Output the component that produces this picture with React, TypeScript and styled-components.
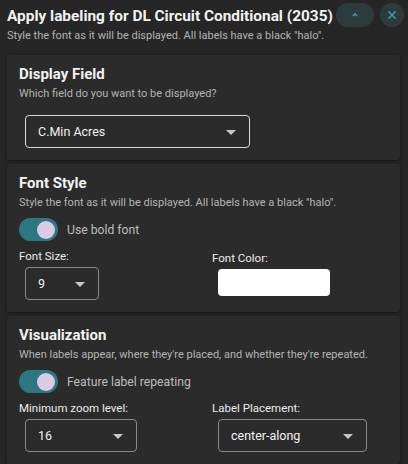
import React, { useState } from 'react'
import styled, { createGlobalStyle } from 'styled-components'

const GlobalStyle = createGlobalStyle`
    html, body {
        margin: 0;
        padding: 0;
        background: #262626;
        font-family: Roboto, 'Liberation Sans', sans-serif;
    }
`

const Page = styled.div`
    width: 408px;
    height: 464px;
    overflow: hidden;
    box-sizing: border-box;
    padding: 3px 4px 0 7px;
    display: flex;
    flex-direction: column;
`

const Header = styled.div`
    display: flex;
    align-items: flex-start;
    justify-content: space-between;
`

const HeaderText = styled.div`
    display: flex;
    flex-direction: column;
    min-width: 0;
`

const Title = styled.h1`
    margin: 2px 0 0;
    font-size: 15.4px;
    line-height: 22px;
    font-weight: 700;
    color: #f2f2f2;
    white-space: nowrap;
`

const Hint = styled.p`
    margin: 1px 0 0;
    font-size: 11px;
    line-height: 16px;
    color: #b4b4b4;
    white-space: nowrap;
`

const HeaderActions = styled.div`
    display: flex;
    gap: 6px;
    flex-shrink: 0;
`

const IconButton = styled.button<{ wide?: boolean }>`
    width: ${(p) => (p.wide ? '38px' : '24px')};
    height: 24px;
    border: none;
    border-radius: 12px;
    background: #2e3b3c;
    color: #3b9ea6;
    display: flex;
    align-items: center;
    justify-content: center;
    padding: 0;
    cursor: pointer;
`

const Cards = styled.div`
    display: flex;
    flex-direction: column;
    gap: 4px;
    margin-top: 11px;
    margin-right: 4px;
`

const Card = styled.section`
    background: #2b2b2b;
    border-radius: 3px;
    box-shadow: 0 1px 3px rgba(0, 0, 0, 0.45);
    padding: 8px 12px 12px;
`

const CardTitle = styled.h2`
    margin: 0;
    font-size: 15px;
    line-height: 22px;
    font-weight: 700;
    color: #f2f2f2;
`

const SelectSpace = styled.div`
    margin-top: 13px;
`

const Field = styled.div<{ width: number; light?: boolean }>`
    box-sizing: border-box;
    width: ${(p) => p.width}px;
    height: 33px;
    margin-left: 6px;
    border: 1px solid ${(p) => (p.light ? '#d8d8d8' : '#8a8a8a')};
    border-radius: 4px;
    display: flex;
    align-items: center;
    justify-content: space-between;
    padding: 0 13px 0 12px;
    font-size: 12.5px;
    color: #f2f2f2;
`

const Caret = styled.span`
    width: 0;
    height: 0;
    border-left: 5px solid transparent;
    border-right: 5px solid transparent;
    border-top: 5px solid #c8c8c8;
    margin-top: 2px;
`

const SwitchRow = styled.label`
    display: flex;
    align-items: center;
    gap: 9px;
    margin-top: 7px;
    font-size: 12.2px;
    color: #bdbdbd;
    cursor: pointer;
`

const Track = styled.span<{ on: boolean }>`
    width: 39px;
    height: 23px;
    border-radius: 12px;
    background: ${(p) => (p.on ? '#2d7880' : '#555')};
    display: flex;
    align-items: center;
    justify-content: ${(p) => (p.on ? 'flex-end' : 'flex-start')};
    padding: 0 3px;
    box-sizing: border-box;
`

const Thumb = styled.span`
    width: 18px;
    height: 18px;
    border-radius: 50%;
    background: #dccbe4;
`

const Grid = styled.div`
    display: grid;
    grid-template-columns: 176px 1fr;
    column-gap: 17px;
    margin-top: 8px;
`

const Column = styled.div<{ offset?: number }>`
    display: flex;
    flex-direction: column;
    gap: 4px;
    padding-top: ${(p) => p.offset ?? 0}px;
`

const Label = styled.span`
    font-size: 11.5px;
    line-height: 14px;
    color: #ececec;
`

const ColorBox = styled.div`
    width: 112px;
    height: 27px;
    margin-left: 6px;
    background: #ffffff;
    border-radius: 4px;
`

const Select = ({ value, width, light }: { value: string; width: number; light?: boolean }) => (
    <Field width={width} light={light}>
        <span>{value}</span>
        <Caret />
    </Field>
)

const Toggle = ({ label }: { label: string }) => {
    const [on, setOn] = useState(true)
    return (
        <SwitchRow onClick={() => setOn(!on)}>
            <Track on={on}>
                <Thumb />
            </Track>
            {label}
        </SwitchRow>
    )
}

const App: React.FC = (): JSX.Element => {
    return (
        <Page>
            <GlobalStyle />
            <Header>
                <HeaderText>
                    <Title>Apply labeling for DL Circuit Conditional (2035)</Title>
                    <Hint>Style the font as it will be displayed. All labels have a black "halo".</Hint>
                </HeaderText>
                <HeaderActions>
                    <IconButton wide aria-label="collapse">
                        <svg width="10" height="10" viewBox="0 0 10 10">
                            <path d="M3 6 L5 4 L7 6" stroke="currentColor" strokeWidth="1.6" fill="none" />
                        </svg>
                    </IconButton>
                    <IconButton aria-label="close">
                        <svg width="10" height="10" viewBox="0 0 10 10">
                            <path d="M1.5 1.5 L8.5 8.5 M8.5 1.5 L1.5 8.5" stroke="currentColor" strokeWidth="1.6" />
                        </svg>
                    </IconButton>
                </HeaderActions>
            </Header>

            <Cards>
                <Card>
                    <CardTitle>Display Field</CardTitle>
                    <Hint>Which field do you want to be displayed?</Hint>
                    <SelectSpace>
                        <Select value="C.Min Acres" width={225} light />
                    </SelectSpace>
                </Card>

                <Card>
                    <CardTitle>Font Style</CardTitle>
                    <Hint>Style the font as it will be displayed. All labels have a black "halo".</Hint>
                    <Toggle label="Use bold font" />
                    <Grid>
                        <Column>
                            <Label>Font Size:</Label>
                            <Select value="9" width={74} />
                        </Column>
                        <Column offset={2}>
                            <Label>Font Color:</Label>
                            <ColorBox />
                        </Column>
                    </Grid>
                </Card>

                <Card>
                    <CardTitle>Visualization</CardTitle>
                    <Hint>When labels appear, where they're placed, and whether they're repeated.</Hint>
                    <Toggle label="Feature label repeating" />
                    <Grid>
                        <Column>
                            <Label>Minimum zoom level:</Label>
                            <Select value="16" width={112} />
                        </Column>
                        <Column>
                            <Label>Label Placement:</Label>
                            <Select value="center-along" width={149} />
                        </Column>
                    </Grid>
                </Card>
            </Cards>
        </Page>
    )
}

export default App
